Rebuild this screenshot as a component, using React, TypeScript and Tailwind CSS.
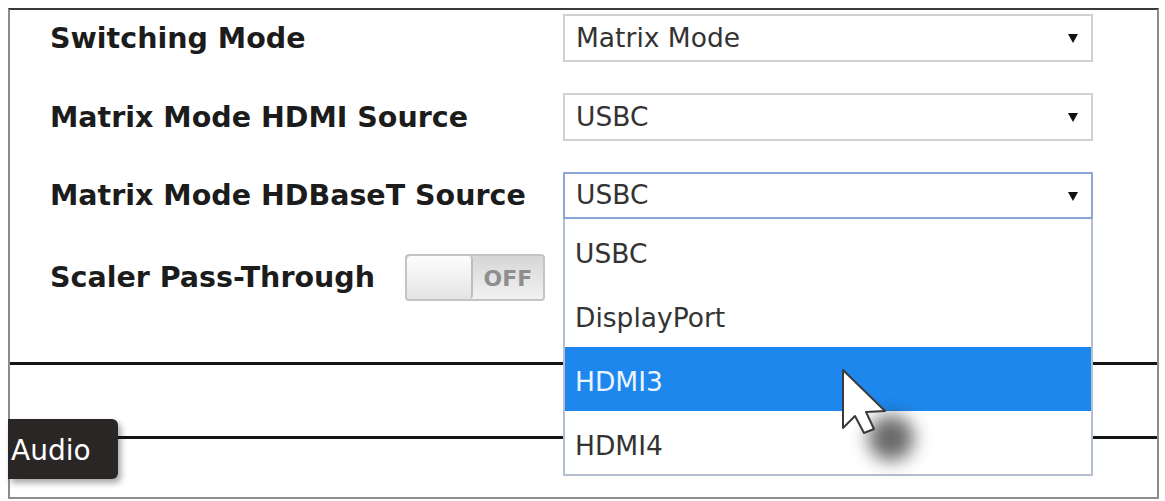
import React from 'react'

const labelFont = { fontFamily: '"DejaVu Sans", "Liberation Sans", sans-serif' }

function Caret() {
  return (
    <svg width="10" height="10" viewBox="0 0 10 10" className="shrink-0">
      <path d="M0 1 L10 1 L5 10 Z" fill="#111" />
    </svg>
  )
}

function Select({ value, focused }: { value: string; focused?: boolean }) {
  return (
    <div
      className={
        'flex items-center justify-between w-[530px] pl-[11px] pr-[13px] bg-white text-[26.5px] text-[#333] ' +
        (focused
          ? 'h-[47px] border-2 border-[#8aa6d6]'
          : 'h-[48px] border-2 border-[#d0d0d0]')
      }
    >
      <span className="leading-none">{value}</span>
      <Caret />
    </div>
  )
}

function Row({ label, children, className }: { label: string; children: React.ReactNode; className?: string }) {
  return (
    <div className={'flex items-center ' + (className || '')}>
      <div className="w-[513px] text-[28.5px] font-bold text-[#1c1c1c] leading-none pt-[2px]">{label}</div>
      {children}
    </div>
  )
}

export default function App() {
  const options = ['USBC', 'DisplayPort', 'HDMI3', 'HDMI4']

  return (
    <div className="min-h-screen bg-white pt-[8px] pl-[8px]" style={labelFont}>
      <div className="relative w-[1151px] h-[491px] bg-white border-2 border-[#8c8c8c] border-t-[#3a3a3a]">
        <div className="pl-[40px] pt-[4px]">
          <Row label="Switching Mode">
            <Select value="Matrix Mode" />
          </Row>
          <Row label="Matrix Mode HDMI Source" className="mt-[31px]">
            <Select value="USBC" />
          </Row>
          <Row label="Matrix Mode HDBaseT Source" className="mt-[31px]">
            <div className="relative">
              <Select value="USBC" focused />
              {/* open dropdown list */}
              <div className="absolute left-0 top-full z-20 w-[530px] h-[257px] bg-white border-2 border-t-0 border-[#b4bfcf] text-[26.5px] text-[#333]">
                {options.map(o => (
                  <div
                    key={o}
                    className={
                      'h-[64px] flex items-center pl-[10px] pt-[6px] leading-none ' +
                      (o === 'HDMI3' ? 'bg-[#1d87ee] text-[#eaf4ff]' : '')
                    }
                  >
                    {o}
                  </div>
                ))}
              </div>
            </div>
          </Row>

          <div className="flex items-center mt-[35px]">
            <div className="w-[355px] text-[28.5px] font-bold text-[#1c1c1c] leading-none pt-[2px]">Scaler Pass-Through</div>
            <div className="flex w-[140px] h-[47px] rounded-[4px] border-2 border-[#c4c4c4] overflow-hidden bg-gradient-to-b from-[#d6d6d6] to-[#f2f2f2]">
              <div className="w-[66px] h-full rounded-[4px] border-r-2 border-[#bdbdbd] bg-gradient-to-b from-[#fdfdfd] to-[#e4e4e4]" />
              <div className="flex-1 flex items-center justify-center text-[22px] font-bold text-[#8e8e8e] leading-none pt-[2px]">
                OFF
              </div>
            </div>
          </div>
        </div>

        <div className="mt-[61px] h-[3px] bg-[#141414]" />

        <div className="flex mt-[54px] -ml-[2px]">
          <div className="w-[110px] h-[60px] rounded-r-[6px] bg-[#2a2626] shadow-[3px_4px_6px_rgba(0,0,0,0.35)] flex items-center pl-[3px] pt-[4px]">
            <span className="text-[28px] text-white leading-none">Audio</span>
          </div>
          <div className="flex-1 mt-[17px] h-[3px] bg-[#141414]" />
        </div>

        {/* mouse pointer with its drop shadow */}
        <div className="absolute left-[858px] top-[405px] z-30 w-[46px] h-[46px] rounded-full bg-[#2b2b2b] opacity-70 blur-[9px]" />
        <svg
          className="absolute left-[831px] top-[358px] z-40"
          width="48"
          height="68"
          viewBox="0 0 48 68"
        >
          <path
            d="M2 2 L2 60 L14 48 L23 65 L33 61 L25 44 L44 43 Z"
            fill="#fff"
            stroke="#3a3a3a"
            strokeWidth="2"
            strokeLinejoin="round"
          />
        </svg>
      </div>
    </div>
  )
}
